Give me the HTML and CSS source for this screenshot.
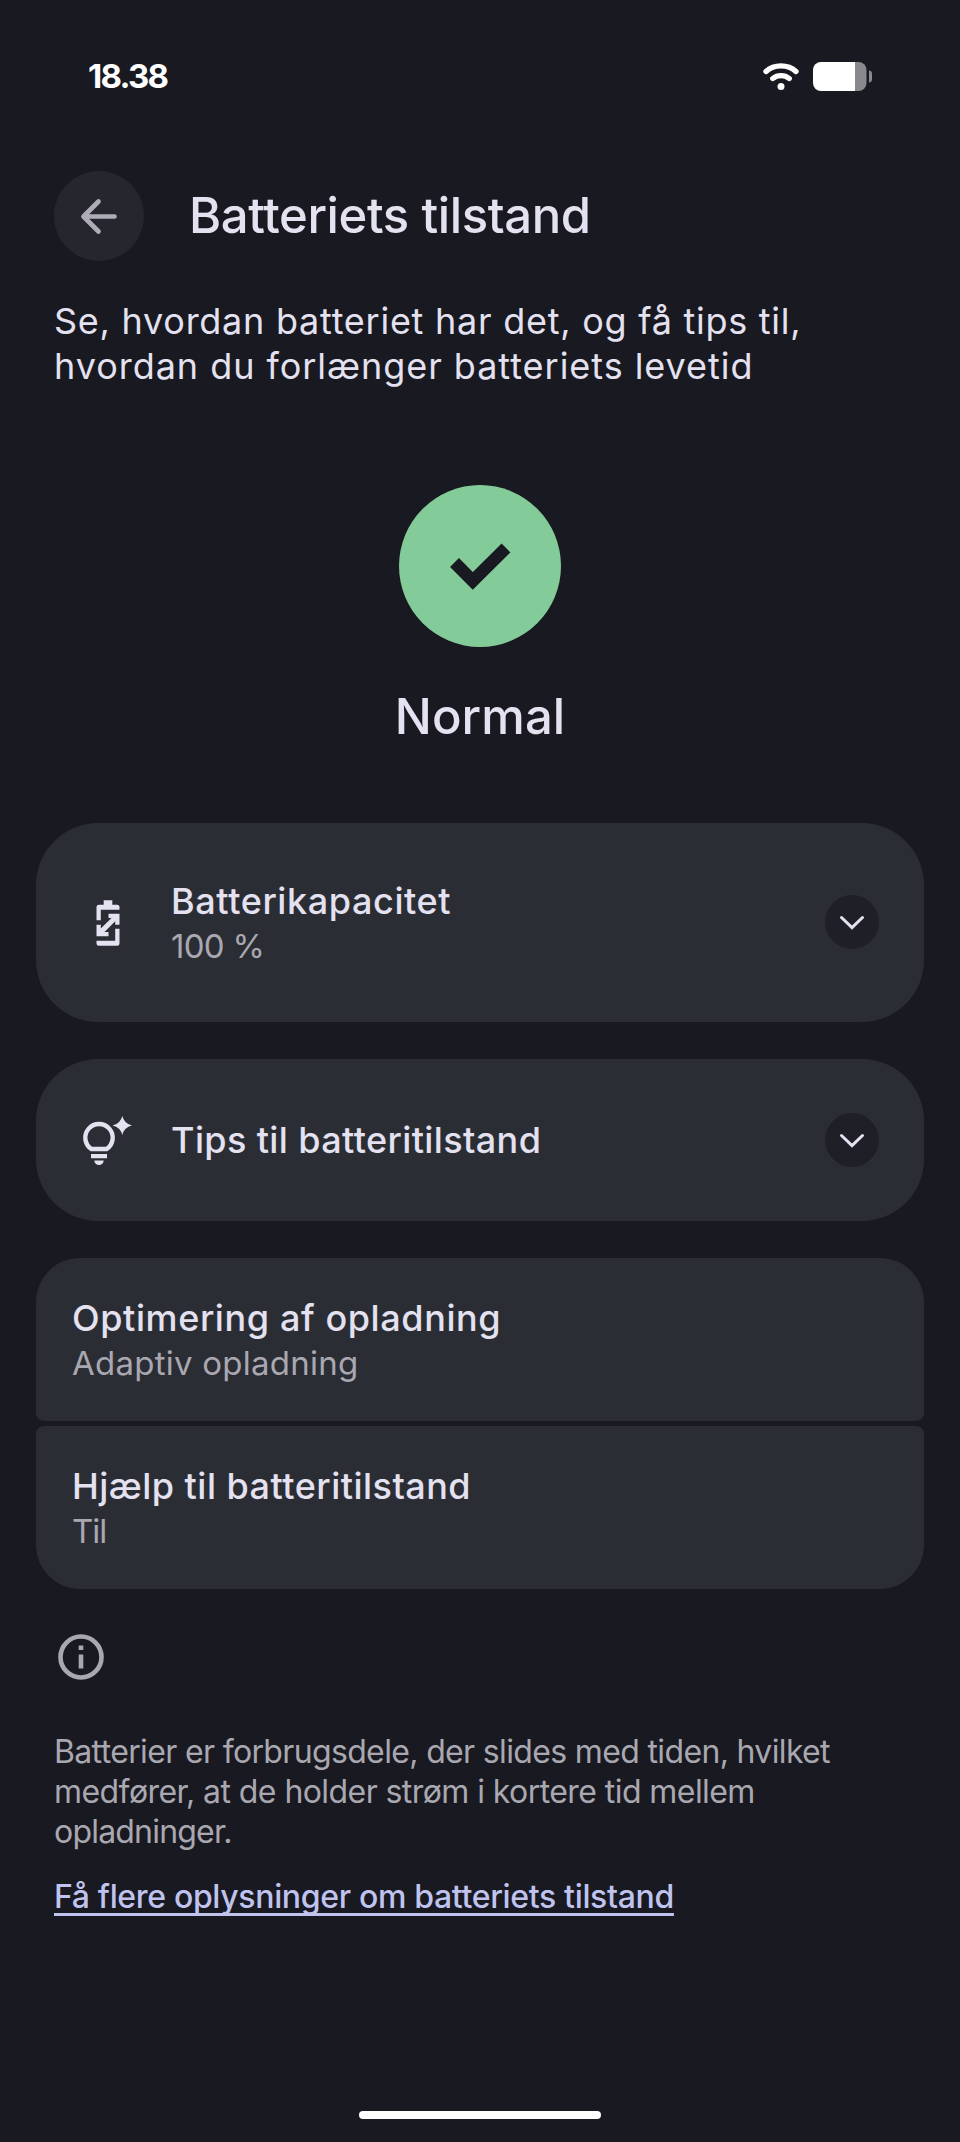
FILE: index.html
```html
<!DOCTYPE html>
<html lang="da">
<head>
<meta charset="utf-8">
<title>Batteriets tilstand</title>
<link rel="stylesheet" href="styles.css">
</head>
<body>
<div class="screen">
  <div class="statusbar">
    <span class="time">18.38</span>
    <span class="status-icons">
      <svg width="38" height="30" viewBox="0 0 38 30" fill="none" stroke="#fff" stroke-linecap="round"><path d="M4 9.500C12 2 26 2 34 9.500" stroke-width="5.400"/><path d="M10.800 16.500C15.500 12.700 22.500 12.700 27.200 16.500" stroke-width="5.400"/><circle cx="19" cy="24.500" r="3.500" fill="#fff" stroke="none"/></svg>
      <svg width="60" height="30" viewBox="0 0 60 30"><path d="M8 0H42V29H8A8 8 0 0 1 0 21V8A8 8 0 0 1 8 0Z" fill="#fff"/><path d="M42 0H45.500A8 8 0 0 1 53.500 8V21A8 8 0 0 1 45.500 29H42Z" fill="#88888d"/><path d="M56 8.500C58 8.500 59 10 59 11.500V17.500C59 19 58 20.500 56 20.500Z" fill="#88888d"/></svg>
    </span>
  </div>
  <header class="header">
    <span class="back"><svg width="90" height="90" viewBox="0 0 90 90" fill="none" stroke="#aeacb7" stroke-width="4.700" stroke-linecap="round" stroke-linejoin="round"><path d="M60.500 45.500H30M44.500 30.500L29.500 45.500L44.500 60.500"/></svg></span>
    <h1 class="title">Batteriets tilstand</h1>
  </header>
  <p class="intro"><span class="intro-a">Se, hvordan batteriet har det, og få tips til,</span><br><span class="intro-b">hvordan du forlænger batteriets levetid</span></p>
  <section class="health">
    <svg width="162" height="162" viewBox="0 0 162 162"><circle cx="81" cy="81" r="81" fill="#83cb98"/><path d="M55.500 77.500L73.800 96L107 63" fill="none" stroke="#191921" stroke-width="12.500"/></svg>
    <h2 class="state">Normal</h2>
  </section>
  <main class="cards">
    <section class="card tall">
      <svg width="56" height="56" viewBox="0 3.300 56 56" fill="#e4e1f0"><path d="M16.500 28.500V15.500Q16.500 13 19 13H23.700V8.500H32.300V13H37Q39.500 13 39.500 15.500V18H20.800V28.500Z"/><path d="M28.500 22H39.500V33H35.200V29.500L24.500 40.200H28.500V44.500H16.500V33H20.800V36.800L31.500 26.300H28.500Z"/><path d="M39.500 37V51.500Q39.500 54 37 54H19Q16.500 54 16.500 51.500V49H35.200V37Z"/></svg>
      <div class="body"><div class="name capacity">Batterikapacitet</div><div class="sub percent">100 %</div></div>
      <span class="chev"><svg width="54" height="54" viewBox="0 0 54 54" fill="none" stroke="#e4e1f0" stroke-width="3" stroke-linecap="round"><path d="M16.500 22.500L27 32.700L37.500 22.500"/></svg></span>
    </section>
    <section class="card">
      <svg width="56" height="56" viewBox="0 0 56 56" fill="#e4e1f0"><path d="M11.300 37A13.700 13.700 0 1 1 26.700 37Z" fill="none" stroke="#e4e1f0" stroke-width="4.400"/><path d="M11 41.900H27V46.300H11ZM14.300 48.600H23.700A4.700 4.500 0 0 1 14.300 48.600Z"/><path d="M42.300 4Q44.200 11.700 52 13.500Q44.200 15.300 42.300 23Q40.400 15.300 32.600 13.500Q40.400 11.700 42.300 4Z"/></svg>
      <div class="body"><div class="name tips">Tips til batteritilstand</div></div>
      <span class="chev"><svg width="54" height="54" viewBox="0 0 54 54" fill="none" stroke="#e4e1f0" stroke-width="3" stroke-linecap="round"><path d="M16.500 22.500L27 32.700L37.500 22.500"/></svg></span>
    </section>
    <div class="group">
      <section class="row first"><div class="name optimize">Optimering af opladning</div><div class="sub adaptive">Adaptiv opladning</div></section>
      <section class="row last"><div class="name help">Hjælp til batteritilstand</div><div class="sub on">Til</div></section>
    </div>
  </main>
  <footer class="footer">
    <svg class="info" width="46" height="46" viewBox="0 0 46 46" fill="#a9a8b0"><circle cx="23" cy="23" r="20.500" fill="none" stroke="#a9a8b0" stroke-width="4.600"/><path d="M20.700 11.500H25.300V16H20.700ZM20.700 20.500H25.300V34.500H20.700Z"/></svg>
    <p class="note"><span class="note-a">Batterier er forbrugsdele, der slides med tiden, hvilket</span><br><span class="note-b">medfører, at de holder strøm i kortere tid mellem</span><br><span class="note-c">opladninger.</span></p>
    <a class="link">Få flere oplysninger om batteriets tilstand</a>
  </footer>
  <div class="homebar"></div>
</div>
</body>
</html>
```
FILE: styles.css
```css
* { box-sizing: border-box; margin: 0; padding: 0; }
body { background: #191921; color: #e4e1f0; font-family: Inter, sans-serif; }
.screen { width: 960px; height: 2142px; display: flex; flex-direction: column; background: #191921; white-space: nowrap; overflow: hidden; }
svg { display: block; flex: none; }
.statusbar { height: 96px; padding: 56px 87px 0 88px; display: flex; align-items: center; justify-content: space-between; }
.time { font-size: 33px; line-height: 40px; font-weight: 700; letter-spacing: -1.8px; color: #fff; }
.status-icons { display: flex; align-items: center; gap: 13px; padding-top: 2px; }
.header { margin-top: 75px; padding-left: 54px; display: flex; align-items: center; gap: 45px; }
.back { width: 90px; height: 90px; border-radius: 50%; background: #26262f; }
.title, .state { font-size: 49px; line-height: 60px; font-weight: 500; }
.title { letter-spacing: -0.38px; }
.state { letter-spacing: 0.1px; }
.intro { margin: 38px 0 0 54px; font-size: 36px; line-height: 45px; }
.intro-a { letter-spacing: 0.74px; }
.intro-b { letter-spacing: 0.96px; }
.health { margin-top: 96px; display: flex; flex-direction: column; align-items: center; gap: 40px; }
.cards { margin: 76px 36px 0; display: flex; flex-direction: column; gap: 37px; }
.card { height: 162px; border-radius: 62px; background: #2b2d35; padding: 0 45px 0 44px; display: flex; align-items: center; }
.tall { height: 199px; }
.tall .chev { margin-bottom: 1px; }
.body { flex: 1; margin-left: 35px; }
.tall .body { padding-top: 2px; }
.name { font-size: 36px; line-height: 45px; font-weight: 500; }
.sub { font-size: 33px; line-height: 44px; color: #a9a8b0; }
.capacity { letter-spacing: 0.6px; }
.percent { letter-spacing: -0.7px; }
.tips { letter-spacing: 0.38px; }
.optimize { letter-spacing: 0.6px; }
.adaptive { letter-spacing: 0.25px; }
.help { letter-spacing: 0.48px; }
.on { letter-spacing: -1px; }
.chev { width: 54px; height: 54px; border-radius: 50%; background: #1f1f28; }
.group { display: flex; flex-direction: column; gap: 5px; }
.row { height: 163px; padding: 38px 36px 0; background: #2b2d35; }
.first { border-radius: 44px 44px 8px 8px; }
.last { border-radius: 8px 8px 44px 44px; }
.footer { margin: 45px 54px 0; font-size: 32px; line-height: 40px; color: #a9a8b0; }
.info { margin-left: 4px; }
.note { margin-top: 52px; }
.note-a { letter-spacing: -0.65px; }
.note-b { letter-spacing: -0.57px; }
.note-c { letter-spacing: -0.8px; }
.link { display: block; width: max-content; margin-top: 25px; font-weight: 500; letter-spacing: -0.34px; color: #bfc3ee; text-decoration: underline; text-decoration-thickness: 3px; text-underline-offset: 5px; text-decoration-skip-ink: none; }
.homebar { width: 242px; height: 8px; margin: auto auto 23px; border-radius: 4px; background: #fff; }
```
